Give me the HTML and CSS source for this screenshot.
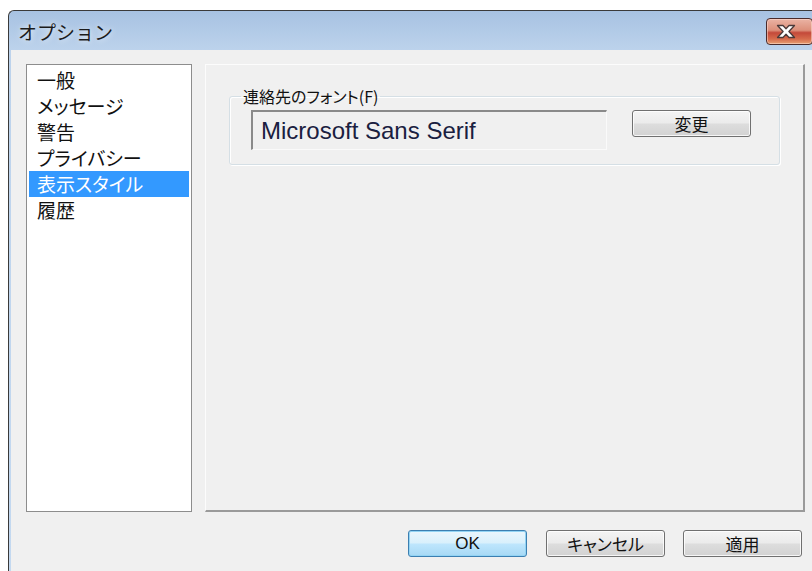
FILE: index.html
```html
<!DOCTYPE html>
<html lang="ja">
<head>
<meta charset="utf-8">
<title>オプション</title>
<link rel="stylesheet" href="styles.css">
</head>
<body>
<div class="window">
  <div class="titlebar">
    <span class="title">オプション</span>
    <button class="close" aria-label="閉じる">
      <svg width="24" height="15" viewBox="0 0 24 15">
        <path d="M3.5 1.5h5.5l3 3.2 3-3.2h5.5l-5.6 6 5.6 6h-5.5l-3-3.2-3 3.2H3.5l5.6-6z" fill="#ffffff" stroke="#4b3a3a" stroke-width="1.3" stroke-linejoin="round"/>
      </svg>
    </button>
  </div>
  <div class="body">
    <div class="main">
      <ul class="list">
        <li>一般</li>
        <li>メッセージ</li>
        <li>警告</li>
        <li>プライバシー</li>
        <li class="selected">表示スタイル</li>
        <li>履歴</li>
      </ul>
      <div class="panel">
        <fieldset class="group">
          <legend>連絡先のフォント(F)</legend>
          <div class="font-row">
            <div class="font-field">Microsoft Sans Serif</div>
            <button class="btn change">変更</button>
          </div>
        </fieldset>
      </div>
    </div>
    <div class="actions">
      <button class="btn default">OK</button>
      <button class="btn">キャンセル</button>
      <button class="btn">適用</button>
    </div>
  </div>
</div>
</body>
</html>
```

FILE: styles.css
```css
html, body {
  margin: 0;
  padding: 0;
  overflow: hidden;
  background: #ffffff;
}

body {
  width: 812px;
  height: 571px;
  font-family: "Noto Sans CJK JP", "Liberation Sans", sans-serif;
  color: #000;
}

.window {
  margin: 10px 0 0 8px;
  width: 813px;
  height: 561px;
  box-sizing: border-box;
  border-top: 1px solid #3a3a3a;
  border-left: 1px solid #3a3a3a;
  border-radius: 6px 0 0 0;
  background: linear-gradient(#a7c2e2, #bdd3ec 40px, #c4d9f0);
  display: flex;
  flex-direction: column;
  overflow: hidden;
}

.titlebar {
  height: 39px;
  flex: none;
  display: flex;
  align-items: center;
  padding-left: 9px;
}

.title {
  font-size: 19px;
  line-height: 24px;
  color: #1b1b1b;
  text-shadow: 0 0 6px rgba(255, 255, 255, 0.9);
  margin-top: 2px;
}

/* window close button in the caption */
.close {
  align-self: flex-start;
  flex: none;
  margin-left: auto;
  margin-right: 8px;
  margin-top: 7px;
  width: 47px;
  height: 27px;
  padding: 0;
  border: 1px solid #4a2b2b;
  border-radius: 4px;
  background: linear-gradient(#eab3a4, #dc8f7a 45%, #c4493a 55%, #d66b4c 80%, #e7a072);
  box-shadow: inset 0 0 0 1px rgba(255, 220, 210, 0.55);
  display: flex;
  align-items: center;
  justify-content: center;
}

.close svg {
  display: block;
  margin-left: -8px;
}

.body {
  flex: 1;
  margin-left: 2px;
  background: #f0f0f0;
  padding: 14px 0 0 15px;
}

.main {
  display: flex;
  gap: 13px;
  height: 448px;
  width: 779px;
}

.list {
  list-style: none;
  margin: 0;
  padding: 2px;
  width: 166px;
  box-sizing: border-box;
  background: #ffffff;
  border: 1px solid #8d8d8d;
  font-size: 19px;
  font-feature-settings: "palt";
}

.list li {
  height: 26px;
  line-height: 26px;
  padding-left: 8px;
  color: #111;
}

.list li.selected {
  background: #3399ff;
  color: #ffffff;
}

.panel {
  width: 600px;
  box-sizing: border-box;
  border: 1px solid #fcfcfc;
  border-right: 2px solid #9a9a9a;
  border-bottom: 2px solid #9a9a9a;
  padding: 20px 0 0 23px;
}

/* etched group frame around the font setting */
.group {
  margin: 0;
  width: 551px;
  box-sizing: border-box;
  border: 1px solid #d5dfe5;
  border-radius: 3px;
  box-shadow: inset 1px 1px 0 #ffffff, 1px 1px 0 #ffffff;
  padding: 3px 20px 14px 21px;
  min-width: 0;
}

.group legend {
  font-size: 16px;
  line-height: 22px;
  padding: 0 2px;
  margin-left: -10px;
  color: #111;
  font-feature-settings: "palt";
}

.font-row {
  display: flex;
  align-items: flex-start;
  gap: 25px;
}

.font-field {
  width: 356px;
  height: 40px;
  box-sizing: border-box;
  border-top: 2px solid #8a8a8a;
  border-left: 2px solid #8a8a8a;
  border-right: 1px solid #fafafa;
  border-bottom: 1px solid #fafafa;
  background: #f0f0f0;
  padding-left: 8px;
  font-family: "Liberation Sans", Arial, sans-serif;
  font-size: 24px;
  line-height: 37px;
  color: #1a2040;
  white-space: nowrap;
}

.btn {
  height: 27px;
  width: 119px;
  box-sizing: border-box;
  padding: 0;
  border: 1px solid #707070;
  border-radius: 3px;
  background: linear-gradient(#f4f4f4, #ebebeb 48%, #dddddd 52%, #d2d2d2);
  box-shadow: inset 0 0 0 1px rgba(255, 255, 255, 0.8);
  font-family: "Noto Sans CJK JP", sans-serif;
  font-size: 17px;
  line-height: 25px;
  color: #111;
  font-feature-settings: "palt";
}

.actions {
  display: flex;
  justify-content: flex-end;
  gap: 18px;
  margin-top: 18px;
  width: 776px;
}

.btn.default {
  border-color: #3c7fb1;
  background: linear-gradient(#eaf6fd, #d9f0fc 48%, #bee6fd 52%, #a7d9f5);
  box-shadow: inset 0 0 0 1px #93d4f4;
  font-family: "Liberation Sans", Arial, sans-serif;
  font-size: 17px;
  margin-right: 1px;
}
```
